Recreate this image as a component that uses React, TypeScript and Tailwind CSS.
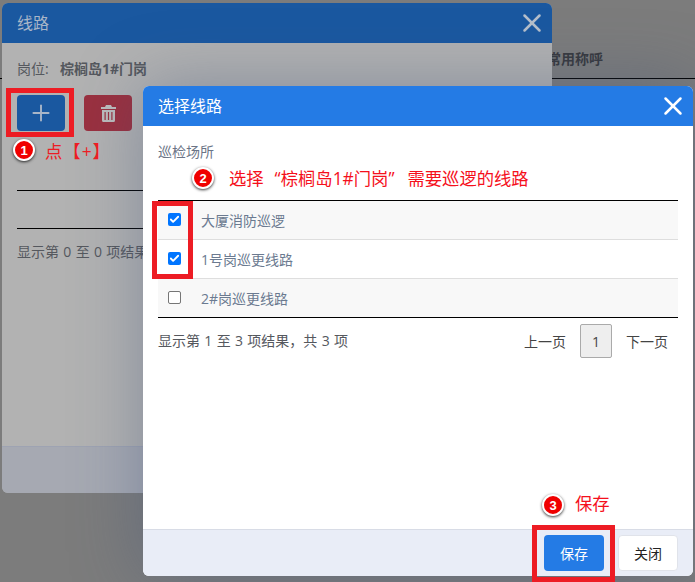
import { Plus, X, Check } from 'lucide-react';

const font = "font-['Open_Sans','Noto_Sans_CJK_SC',sans-serif]";

const rows = [
    { name: '大厦消防巡逻', checked: true, bg: 'bg-[#f8f8f8] h-[38px]' },
    { name: '1号岗巡更线路', checked: true, bg: 'bg-white h-[39px]' },
    { name: '2#岗巡更线路', checked: false, bg: 'bg-[#f8f8f8] h-[39px]' },
];

function Badge({ n, className }: { n: string; className: string }) {
    return (
        <div className={`absolute w-[22px] h-[22px] rounded-full bg-[#f00000] border-2 border-white shadow-[0_1px_3px_rgba(0,0,0,0.8)] flex items-center justify-center text-white text-[13px] font-bold leading-none font-['Liberation_Sans',sans-serif] ${className}`}>
            {n}
        </div>
    );
}

function TrashIcon() {
    return (
        <svg width="15" height="17" viewBox="0 0 15 17" fill="#bdbdbd">
            <path d="M5 0h5l1 2h4v2H0V2h4z" />
            <path fillRule="evenodd" d="M1 5h13v10.5a1.5 1.5 0 0 1-1.5 1.5h-10A1.5 1.5 0 0 1 1 15.5zM3.5 7v8h1.2V7zM6.9 7v8h1.2V7zM10.3 7v8h1.2V7z" />
        </svg>
    );
}

function BackModal() {
    return (
        <div className="absolute left-[2px] top-[3px] w-[550px] h-[490px] rounded-[6px] overflow-hidden bg-[#b2b2b2] flex flex-col">
            <div className="h-[40px] bg-[#1a58a0] flex items-center justify-between pl-[15px] pr-[5px] shrink-0">
                <span className="text-[16px] text-[#a9b6c8]">线路</span>
                <X className="w-[30px] h-[30px] text-[#b5bfcb]" strokeWidth={2} />
            </div>
            <div className="flex-1 px-[15px] pt-[16px] text-[#55585e]">
                <div className="text-[14px] leading-[20px] h-[20px] flex">
                    <span className="w-[43px]">岗位:</span>
                    <span className="font-bold">棕榈岛1#门岗</span>
                </div>
                <div className="flex gap-[19px] mt-[16px]">
                    <div className="w-[48px] h-[36px] rounded-[4px] bg-[#1a58a0] flex items-center justify-center">
                        <Plus className="w-[26px] h-[26px] text-[#a9b6c8]" strokeWidth={1.75} />
                    </div>
                    <div className="w-[48px] h-[36px] rounded-[4px] bg-[#9a303f] flex items-center justify-center">
                        <TrashIcon />
                    </div>
                </div>
                <div className="mt-[59px] h-[39px] border-y border-black" />
                <div className="mt-[13px] text-[14px] leading-[20px] whitespace-nowrap [word-spacing:0.7px]">显示第 0 至 0 项结果</div>
            </div>
            <div className="h-[47px] bg-[#a6a9b2] border-t border-[#9ea3b2] shrink-0" />
        </div>
    );
}

function FrontModal() {
    return (
        <div className="absolute left-[143px] top-[86px] w-[550px] h-[490px] rounded-[6px] overflow-hidden bg-white flex flex-col shadow-[0_0_70px_rgba(60,80,120,0.4)]">
            <div className="h-[40px] bg-[#247be5] flex items-center justify-between pl-[15px] pr-[5px] shrink-0">
                <span className="text-[16px] text-white">选择线路</span>
                <X className="w-[30px] h-[30px] text-white" strokeWidth={2} />
            </div>
            <div className="flex-1 px-[15px] pt-[16px]">
                <div className="text-[14px] leading-[20px] text-[#6b7486]">巡检场所</div>
                <div className="mt-[38px] border-y border-black">
                    {rows.map((row, i) => (
                        <div key={row.name} className={`flex items-center ${row.bg} ${i > 0 ? 'border-t border-[#dedede]' : ''}`}>
                            <div className="w-[33px] flex justify-center -mt-[2px] mr-[10px]">
                                {row.checked ? (
                                    <div className="w-[13px] h-[13px] rounded-[2px] bg-[#0075ff] flex items-center justify-center">
                                        <Check className="w-[11px] h-[11px] text-white" strokeWidth={4} />
                                    </div>
                                ) : (
                                    <div className="w-[13px] h-[13px] rounded-[2px] border border-[#767676] bg-white" />
                                )}
                            </div>
                            <span className="text-[14px] text-[#6b7a90]">{row.name}</span>
                        </div>
                    ))}
                </div>
                <div className="flex items-start justify-between mt-[6px] pr-[10px]">
                    <span className="text-[14px] leading-[20px] mt-[7px] text-[#55585e] [word-spacing:0.7px]">显示第 1 至 3 项结果，共 3 项</span>
                    <div className="flex items-center text-[14px] text-[#444]">
                        <span className="w-[42px] mr-[14px]">上一页</span>
                        <div className="w-[32px] h-[34px] border border-[#aaa] rounded-[2px] bg-[#eeeeee] flex items-center justify-center text-[14px]">1</div>
                        <span className="w-[42px] ml-[14px]">下一页</span>
                    </div>
                </div>
            </div>
            <div className="h-[47px] bg-[#e9edf7] border-t border-[#d8dce6] flex items-center justify-end gap-[14px] pr-[15px] shrink-0">
                <div className="w-[60px] h-[36px] rounded-[4px] bg-[#247be5] text-white text-[14px] flex items-center justify-center">保存</div>
                <div className="w-[60px] h-[36px] rounded-[4px] bg-white border border-[#e0e3ea] text-[#222] text-[14px] flex items-center justify-center">关闭</div>
            </div>
        </div>
    );
}

export default function App() {
    return (
        <div className={`relative w-[695px] h-[582px] overflow-hidden bg-[#7c7c7c] ${font}`}>
            {/* Page behind the dialogs */}
            <div className="absolute left-[552px] top-[78px] w-[143px] border-t border-black" />
            <div className="absolute left-[547px] top-[49px] text-[14px] leading-[20px] font-bold text-[#37393e]">常用称呼</div>
            <div className="absolute left-0 top-[78px] w-[2px] border-t border-black" />

            <BackModal />
            <FrontModal />

            {/* Red annotations */}
            <div className="absolute left-[6px] top-[88px] w-[68px] h-[49px] border-[5px] border-[#ed1c24]" />
            <Badge n="1" className="left-[13px] top-[139px]" />
            <div className="absolute left-[45px] top-[138px] text-[17.33px] leading-[26px] tracking-[1px] text-[#ed1c24] whitespace-nowrap">点【+】</div>

            <Badge n="2" className="left-[192px] top-[167px]" />
            <div className="absolute left-[229px] top-[165px] text-[17.33px] leading-[26px] text-[#f5101c] whitespace-nowrap">
                选择<span className="inline-block w-[17px] text-right">“</span>棕榈岛1#门岗<span className="inline-block w-[19px] text-left">”</span>需要巡逻的线路
            </div>
            <div className="absolute left-[152px] top-[201px] w-[41px] h-[78px] border-[5px] border-[#ed1c24]" />

            <Badge n="3" className="left-[542px] top-[494px]" />
            <div className="absolute left-[575px] top-[490px] text-[17.33px] leading-[26px] text-[#f5101c]">保存</div>
            <div className="absolute left-[532px] top-[525px] w-[83px] h-[57px] border-[5px] border-[#ed1c24]" />
        </div>
    );
}
